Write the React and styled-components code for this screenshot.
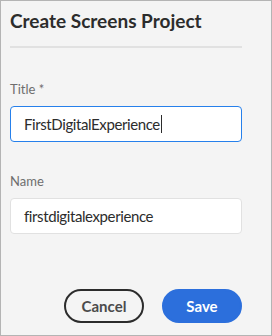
import React from 'react';
import styled, { createGlobalStyle } from 'styled-components';

const GlobalStyle = createGlobalStyle`
  body {
    margin: 0;
    font-family: Lato, "Liberation Sans", sans-serif;
  }
`;

const Dialog = styled.div`
  box-sizing: border-box;
  width: 272px;
  height: 336px;
  border: 1px solid #b4b4b4;
  background: #f4f4f4;
  padding: 8px 29px 0 9px;
  display: flex;
  flex-direction: column;
`;

const Heading = styled.h1`
  margin: 0;
  font-size: 19px;
  line-height: 24px;
  font-weight: 700;
  color: #2c2c2c;
`;

const Divider = styled.div`
  height: 2px;
  background: #e1e1e1;
  margin-top: 13px;
`;

const Form = styled.div`
  display: flex;
  flex-direction: column;
  margin-top: 32px;
  gap: 30px;
`;

const Field = styled.div`
  display: flex;
  flex-direction: column;
`;

const Label = styled.label`
  font-size: 13px;
  line-height: 18px;
  color: #6e6e6e;
  margin-bottom: 8px;
`;

const Input = styled.div`
  box-sizing: border-box;
  height: 36px;
  background: #ffffff;
  border: 1px solid ${(p) => (p.$focused ? '#2680eb' : '#e1e1e1')};
  border-radius: 4px;
  padding: 0 13px;
  display: flex;
  align-items: center;
  font-size: 15px;
  letter-spacing: -0.4px;
  color: #2c2c2c;
`;

const Caret = styled.span`
  display: inline-block;
  width: 1px;
  height: 18px;
  background: #2c2c2c;
  margin-left: 1px;
`;

const Footer = styled.div`
  margin-top: auto;
  margin-bottom: 12px;
  display: flex;
  justify-content: flex-end;
  gap: 18px;
`;

const Button = styled.button`
  box-sizing: border-box;
  width: 80px;
  height: 34px;
  border-radius: 17px;
  font-family: inherit;
  font-size: 15px;
  font-weight: 700;
  cursor: pointer;
  border: 2px solid ${(p) => (p.$primary ? '#2c6fdc' : '#2c2c2c')};
  background: ${(p) => (p.$primary ? '#2c6fdc' : 'transparent')};
  color: ${(p) => (p.$primary ? '#ffffff' : '#4b4b4b')};
`;

export default function App() {
  return (
    <>
      <GlobalStyle />
      <Dialog>
        <Heading>Create Screens Project</Heading>
        <Divider />
        <Form>
          <Field>
            <Label>Title *</Label>
            <Input $focused>
              FirstDigitalExperience
              <Caret />
            </Input>
          </Field>
          <Field>
            <Label>Name</Label>
            <Input>firstdigitalexperience</Input>
          </Field>
        </Form>
        <Footer>
          <Button>Cancel</Button>
          <Button $primary>Save</Button>
        </Footer>
      </Dialog>
    </>
  );
}
